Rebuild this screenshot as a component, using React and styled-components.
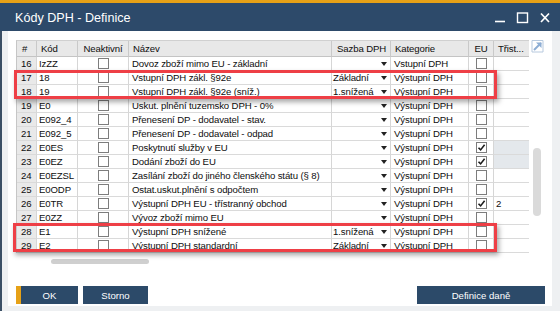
import React from 'react';
import styled, { createGlobalStyle } from 'styled-components';

const GlobalStyle = createGlobalStyle`
  *, *::before, *::after { box-sizing: border-box; }
  html, body { margin: 0; padding: 0; }
  body {
    font-family: "Liberation Sans", Arial, sans-serif;
    background: #fff;
  }
`;

const Window = styled.div`
  position: relative;
  width: 560px;
  height: 311px;
  display: flex;
  flex-direction: column;
  overflow: hidden;
`;

const TitleBar = styled.div`
  height: 31px;
  border-top: 3px solid #e6a117;
  background: #2d4a6a;
  display: flex;
  align-items: center;
  padding: 0 9px 0 15px;
  color: #fff;
`;

const Title = styled.div`
  flex: 1;
  font-size: 12.6px;
  padding-top: 1px;
`;

const Controls = styled.div`
  display: flex;
  align-items: center;
  gap: 10px;
  padding-top: 1px;
`;

const Body = styled.div`
  flex: 1;
  display: flex;
  border-left: 2px solid #3b4f65;
  background: #eef0f2;
  padding: 0 8px 5px 6px;
`;

const Panel = styled.div`
  flex: 1;
  background: #fff;
  padding: 9px 0 0 8px;
  display: flex;
  flex-direction: column;
`;

const GridArea = styled.div`
  display: flex;
`;

const Grid = styled.div`
  width: 513px;
  display: grid;
  grid-template-columns: 20px 41px 51px 203px 59px 78px 25px 35px;
  grid-auto-rows: 14px;
  grid-template-rows: 16px;
  border-left: 1px solid #c6c6c6;
  border-top: 1px solid #d0d0d0;
  font-size: 9.6px;
  letter-spacing: -0.12px;
  color: #0e0e0e;
`;

const HeadCell = styled.div`
  background: #e8e8e8;
  border-right: ${(p) => (p.$last ? 'none' : '1px solid #c9c9c9')};
  border-bottom: 1px solid #c4c4c4;
  display: flex;
  align-items: center;
  justify-content: ${(p) => (p.$center ? 'center' : 'flex-start')};
  padding-left: ${(p) => (p.$center ? 0 : p.$pad ?? 4)}px;
  white-space: nowrap;
  overflow: hidden;
`;

const Cell = styled.div`
  background: ${(p) => p.$bg || '#fff'};
  border-right: ${(p) => (p.$last ? 'none' : '1px solid #d6d6d6')};
  border-bottom: 1px solid #dadada;
  display: flex;
  align-items: center;
  justify-content: ${(p) => (p.$center ? 'center' : 'flex-start')};
  padding-left: ${(p) => (p.$center ? 0 : p.$pad ?? 2)}px;
  white-space: nowrap;
  overflow: hidden;
`;

const RateCell = styled(Cell)`
  justify-content: space-between;
  padding-right: 3px;
`;

const Arrow = styled.span`
  width: 0;
  height: 0;
  border-left: 3.5px solid transparent;
  border-right: 3.5px solid transparent;
  border-top: 4px solid #222;
`;

const Box = styled.span`
  width: 11px;
  height: 11px;
  border: 1px solid #7d7d7d;
  background: #fff;
  display: inline-flex;
  align-items: center;
  justify-content: center;
`;

const Side = styled.div`
  display: flex;
  flex-direction: column;
  padding-left: 2px;
`;

const Expand = styled.svg`
  margin-top: -1px;
`;

const VScroll = styled.div`
  margin: 95px 0 0 2px;
  width: 8px;
  height: 68px;
  border-radius: 4px;
  background: #dadada;
`;

const HScroll = styled.div`
  margin: 6px 0 0 35px;
  width: 98px;
  height: 5px;
  border-radius: 3px;
  background: #cfcfcf;
`;

const ButtonRow = styled.div`
  margin-top: 22px;
  display: flex;
  gap: 5px;
  padding-right: 7px;
`;

const Button = styled.button`
  height: 18px;
  width: ${(p) => p.$w}px;
  margin-left: ${(p) => (p.$push ? 'auto' : 0)};
  border: none;
  border-left: ${(p) => (p.$primary ? '5px solid #e6a117' : 'none')};
  background: #2c4a69;
  color: #fff;
  font-family: inherit;
  font-size: 9.6px;
  padding: 0;
  cursor: pointer;
`;

const Highlight = styled.div`
  position: absolute;
  left: ${(p) => p.$x}px;
  top: ${(p) => p.$y}px;
  width: ${(p) => p.$w}px;
  height: ${(p) => p.$h}px;
  border: 3px solid #ee3f46;
  box-shadow: 2px 3px 5px rgba(0, 0, 0, 0.35);
  pointer-events: none;
`;

const rows = [
  { n: 16, code: 'IzZZ', name: 'Dovoz zboží mimo EU - základní', rate: '', cat: 'Vstupní DPH' },
  { n: 17, code: '18', name: 'Vstupní DPH zákl. §92e', rate: 'Základní', cat: 'Výstupní DPH' },
  { n: 18, code: '19', name: 'Vstupní DPH zákl. §92e (sníž.)', rate: '1.snížená', cat: 'Výstupní DPH' },
  { n: 19, code: 'E0', name: 'Uskut. plnění tuzemsko DPH - 0%', rate: '', cat: 'Výstupní DPH' },
  { n: 20, code: 'E092_4', name: 'Přenesení DP - dodavatel - stav.', rate: '', cat: 'Výstupní DPH' },
  { n: 21, code: 'E092_5', name: 'Přenesení DP - dodavatel - odpad', rate: '', cat: 'Výstupní DPH' },
  { n: 22, code: 'E0ES', name: 'Poskytnutí služby v EU', rate: '', cat: 'Výstupní DPH', eu: true, shade: true },
  { n: 23, code: 'E0EZ', name: 'Dodání zboží do EU', rate: '', cat: 'Výstupní DPH', eu: true, shade: true },
  { n: 24, code: 'E0EZSL', name: 'Zasílání zboží do jiného členského státu (§ 8)', rate: '', cat: 'Výstupní DPH' },
  { n: 25, code: 'E0ODP', name: 'Ostat.uskut.plnění s odpočtem', rate: '', cat: 'Výstupní DPH' },
  { n: 26, code: 'E0TR', name: 'Výstupní DPH EU - třístranný obchod', rate: '', cat: 'Výstupní DPH', eu: true, tri: '2' },
  { n: 27, code: 'E0ZZ', name: 'Vývoz zboží mimo EU', rate: '', cat: 'Výstupní DPH' },
  { n: 28, code: 'E1', name: 'Výstupní DPH snížené', rate: '1.snížená', cat: 'Výstupní DPH' },
  { n: 29, code: 'E2', name: 'Výstupní DPH standardní', rate: 'Základní', cat: 'Výstupní DPH' },
];

const Checkbox = ({ checked }) => (
  <Box>
    {checked && (
      <svg width="9" height="9" viewBox="0 0 9 9">
        <path d="M1.5 4.8 L3.6 6.9 L7.6 1.8" fill="none" stroke="#1c1c1c" strokeWidth="1.6" />
      </svg>
    )}
  </Box>
);

const App = () => (
  <Window>
    <GlobalStyle />
    <TitleBar>
      <Title>Kódy DPH - Definice</Title>
      <Controls>
        <svg width="12" height="12" viewBox="0 0 12 12">
          <path d="M1 9.5 H11" stroke="#fff" strokeWidth="1.6" />
        </svg>
        <svg width="13" height="12" viewBox="0 0 13 12">
          <rect x="1.5" y="1" width="10" height="9.5" fill="none" stroke="#fff" strokeWidth="1.4" />
        </svg>
        <svg width="12" height="12" viewBox="0 0 12 12">
          <path d="M2 1.5 L10 10 M10 1.5 L2 10" stroke="#fff" strokeWidth="1.7" />
        </svg>
      </Controls>
    </TitleBar>
    <Body>
      <Panel>
        <GridArea>
          <Grid>
            <HeadCell $pad={5}>#</HeadCell>
            <HeadCell>Kód</HeadCell>
            <HeadCell $center>Neaktivní</HeadCell>
            <HeadCell>Název</HeadCell>
            <HeadCell $pad={5}>Sazba DPH</HeadCell>
            <HeadCell>Kategorie</HeadCell>
            <HeadCell $center>EU</HeadCell>
            <HeadCell $last>Třist...</HeadCell>
            {rows.map((r) => (
              <React.Fragment key={r.n}>
                <Cell $bg="#e9e9e9" $pad={4}>{r.n}</Cell>
                <Cell>{r.code}</Cell>
                <Cell $center><Checkbox /></Cell>
                <Cell $pad={3}>{r.name}</Cell>
                <RateCell $pad={1}>
                  <span>{r.rate}</span>
                  <Arrow />
                </RateCell>
                <Cell $pad={3}>{r.cat}</Cell>
                <Cell $center><Checkbox checked={r.eu} /></Cell>
                <Cell $last $bg={r.shade ? '#e4e8ec' : '#fff'}>{r.tri}</Cell>
              </React.Fragment>
            ))}
          </Grid>
          <Side>
            <Expand width="13" height="14" viewBox="0 0 13 14">
              <path d="M1 1.5 H12 V13 H1 Z" fill="none" stroke="#b7c9de" strokeWidth="1" />
              <path d="M3 11 L10 4" stroke="#8dadd4" strokeWidth="2" />
              <path d="M5 3.5 H10.5 V9 Z" fill="#8dadd4" />
            </Expand>
            <VScroll />
          </Side>
        </GridArea>
        <HScroll />
        <ButtonRow>
          <Button $primary $w={62}>OK</Button>
          <Button $w={65}>Storno</Button>
          <Button $push $w={128}>Definice daně</Button>
        </ButtonRow>
      </Panel>
    </Body>
    <Highlight $x={14} $y={70} $w={483} $h={29} />
    <Highlight $x={13} $y={223} $w={484} $h={29} />
  </Window>
);

export default App;
